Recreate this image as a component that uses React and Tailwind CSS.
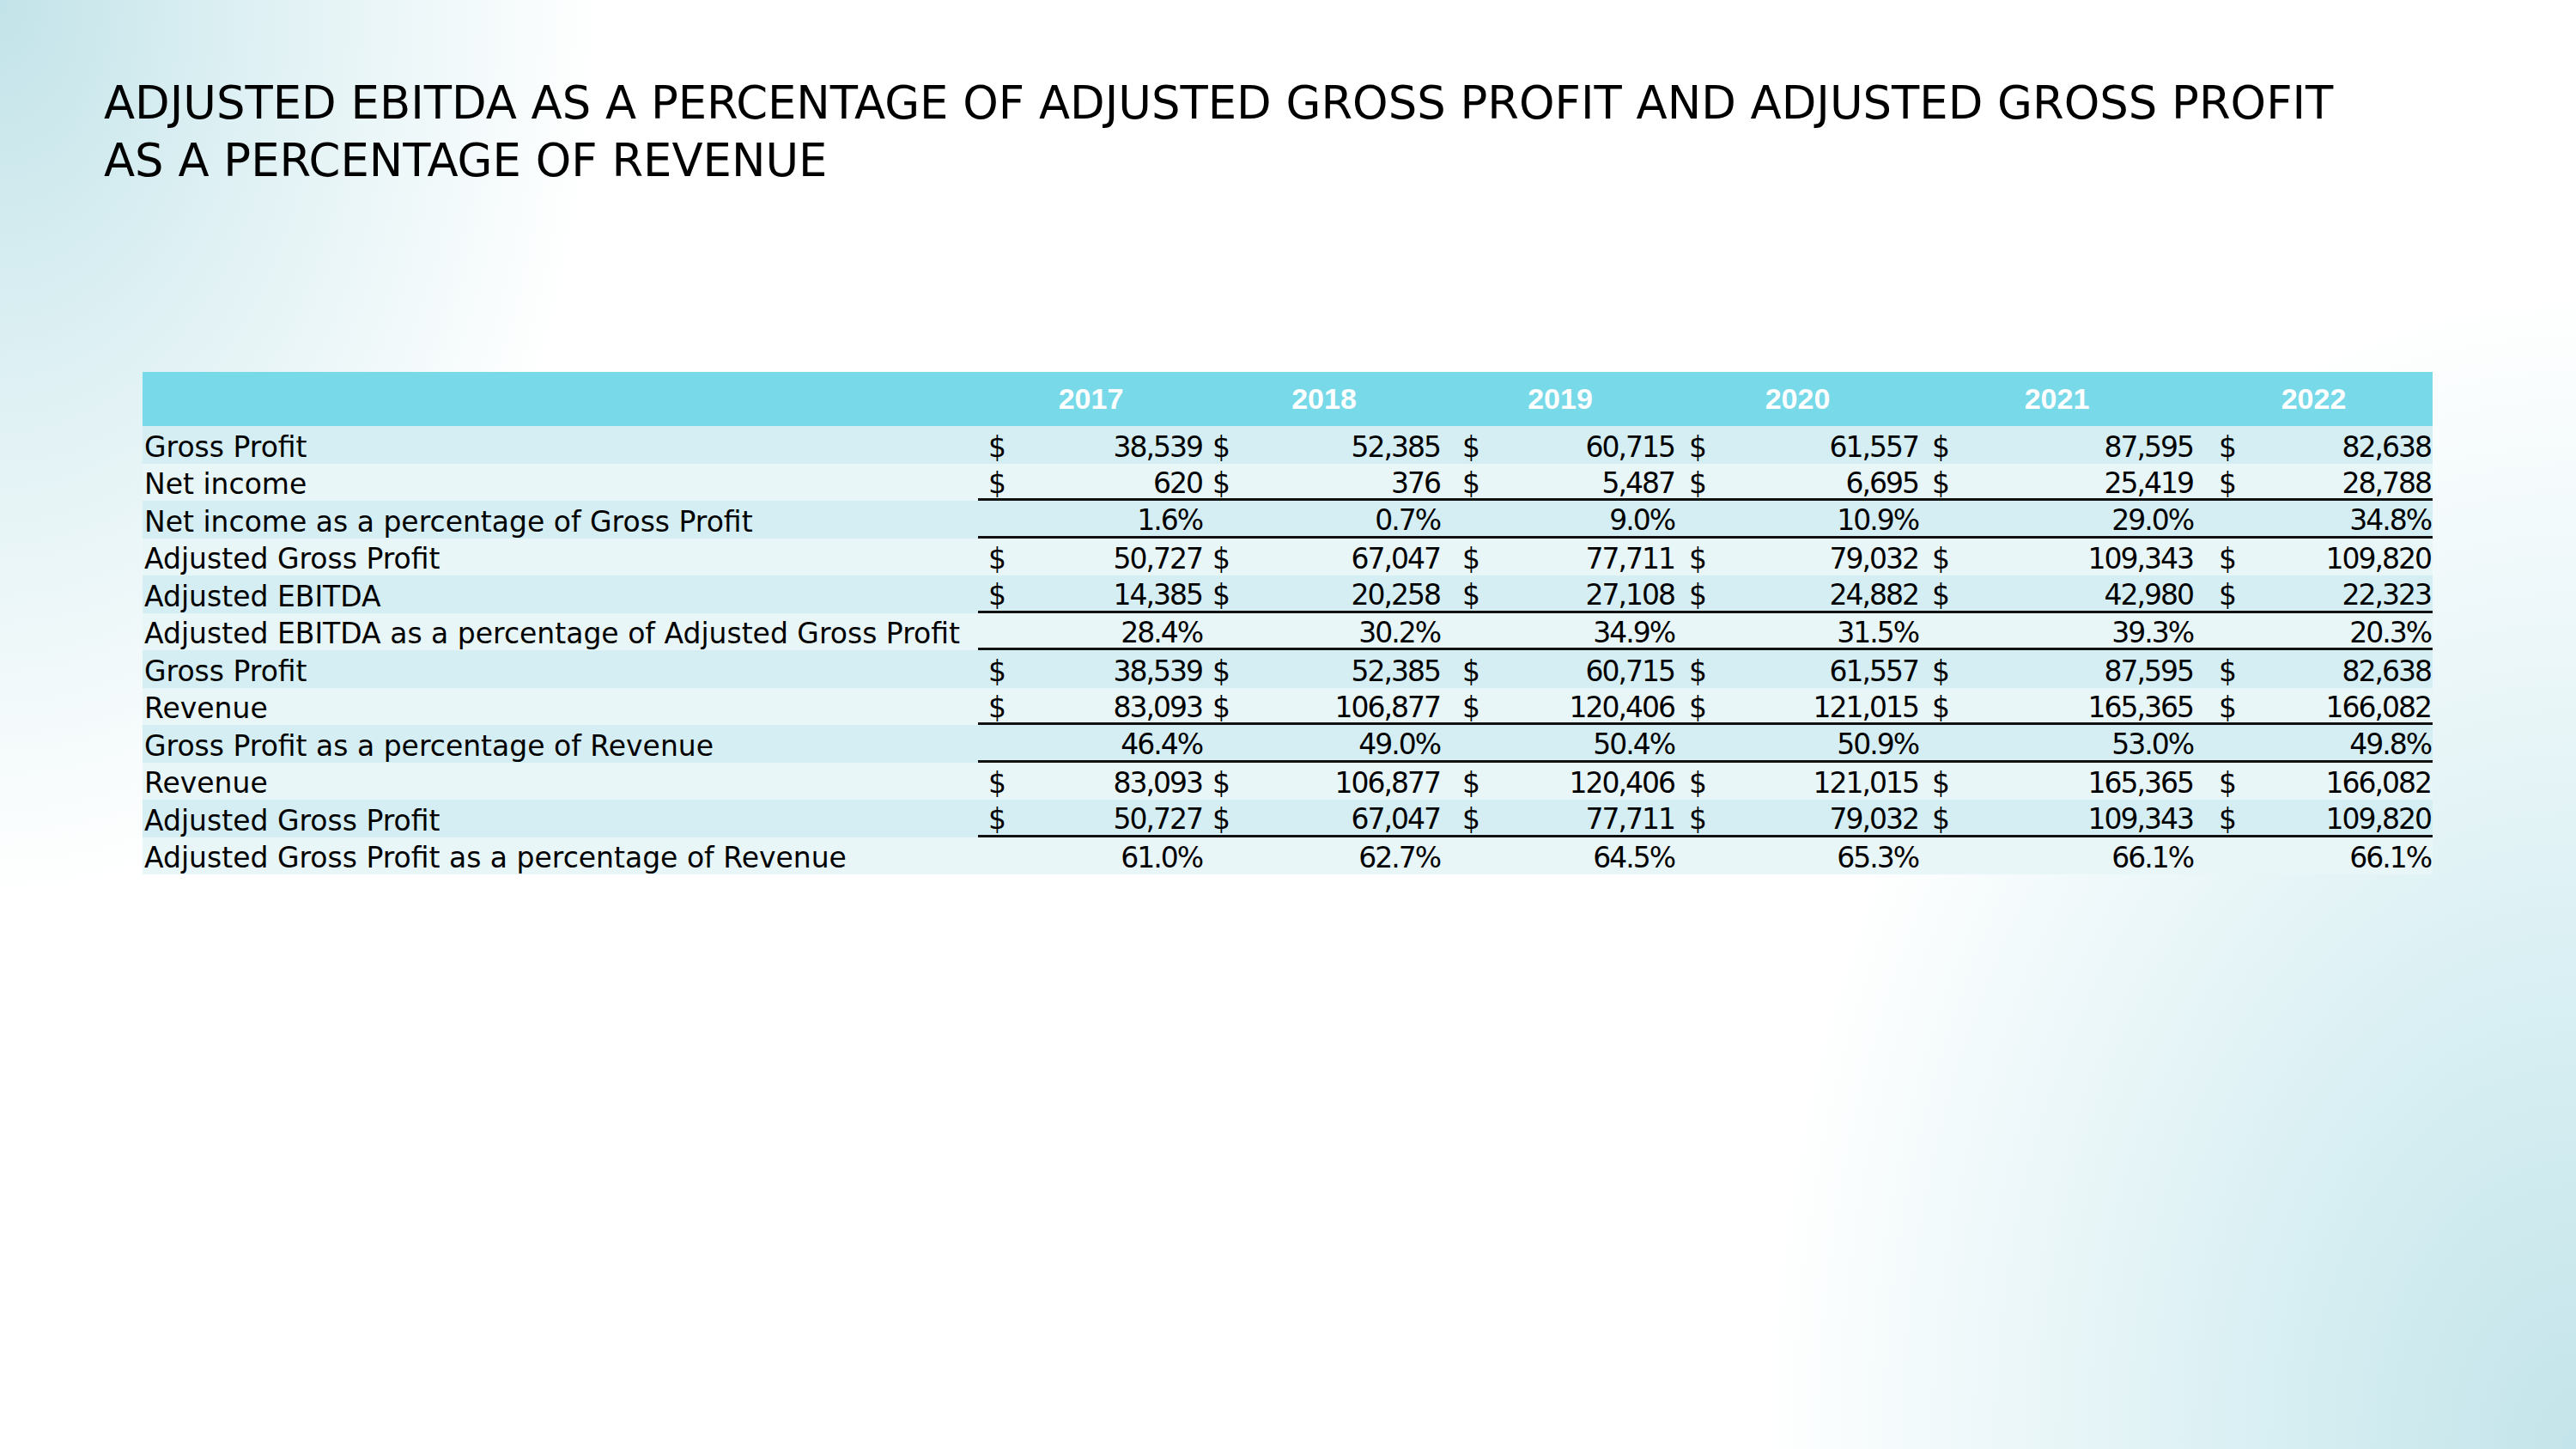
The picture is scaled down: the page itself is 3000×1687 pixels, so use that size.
import React from "react";

const COLS = [
  { cell: "w-[263px] pl-[12px] pr-[2px]", head: "w-[263px]" },
  { cell: "w-[280px] pl-[10px] pr-[5px]", head: "w-[280px]" },
  { cell: "w-[270px] pl-[21px] pr-[2px]", head: "w-[270px]" },
  { cell: "w-[283px] pl-[15px] pr-[1px]", head: "w-[283px]" },
  { cell: "w-[321px] pl-[15px] pr-[2px]", head: "w-[321px]" },
  { cell: "w-[277px] pl-[28px] pr-[2px]", head: "w-[277px]" },
];

const YEARS = ["2017", "2018", "2019", "2020", "2021", "2022"];

const ROWS = [
  { label: "Gross Profit", dollar: true, vals: ["38,539", "52,385", "60,715", "61,557", "87,595", "82,638"] },
  { label: "Net income", dollar: true, border: true, vals: ["620", "376", "5,487", "6,695", "25,419", "28,788"] },
  { label: "Net income as a percentage of Gross Profit", border: true, vals: ["1.6%", "0.7%", "9.0%", "10.9%", "29.0%", "34.8%"] },
  { label: "Adjusted Gross Profit", dollar: true, vals: ["50,727", "67,047", "77,711", "79,032", "109,343", "109,820"] },
  { label: "Adjusted EBITDA", dollar: true, border: true, vals: ["14,385", "20,258", "27,108", "24,882", "42,980", "22,323"] },
  { label: "Adjusted EBITDA as a percentage of Adjusted Gross Profit", border: true, vals: ["28.4%", "30.2%", "34.9%", "31.5%", "39.3%", "20.3%"] },
  { label: "Gross Profit", dollar: true, vals: ["38,539", "52,385", "60,715", "61,557", "87,595", "82,638"] },
  { label: "Revenue", dollar: true, border: true, vals: ["83,093", "106,877", "120,406", "121,015", "165,365", "166,082"] },
  { label: "Gross Profit as a percentage of Revenue", border: true, vals: ["46.4%", "49.0%", "50.4%", "50.9%", "53.0%", "49.8%"] },
  { label: "Revenue", dollar: true, vals: ["83,093", "106,877", "120,406", "121,015", "165,365", "166,082"] },
  { label: "Adjusted Gross Profit", dollar: true, border: true, vals: ["50,727", "67,047", "77,711", "79,032", "109,343", "109,820"] },
  { label: "Adjusted Gross Profit as a percentage of Revenue", vals: ["61.0%", "62.7%", "64.5%", "65.3%", "66.1%", "66.1%"] },
];

function Row({ row, index }) {
  const bg = index % 2 === 0 ? "bg-[#d4eef3]" : "bg-[#e8f6f8]";
  return (
    <div className={`flex h-[43.5px] ${bg}`}>
      <div className="w-[973px] shrink-0 flex items-center pl-[2px] pt-[5px] whitespace-nowrap">
        {row.label}
      </div>
      {row.vals.map((v, i) => (
        <div
          key={i}
          className={`${COLS[i].cell} shrink-0 flex items-center pt-[5px] whitespace-nowrap ${
            row.border ? "border-b-[3px] border-[#111111]" : ""
          }`}
        >
          {row.dollar ? <span>$</span> : null}
          <span className="ml-auto tracking-[-2px]">{v}</span>
        </div>
      ))}
    </div>
  );
}

export default function App() {
  return (
    <div className="w-full h-screen overflow-hidden bg-white bg-[image:radial-gradient(ellipse_700px_1050px_at_0%_0%,#c2e3e9_0%,#ddf0f3_40%,#ffffff00_100%),radial-gradient(ellipse_950px_1350px_at_100%_100%,#c3e4ea_0%,#d6eef2_35%,#ffffff00_100%)] font-['DejaVu_Sans',sans-serif] text-black">
      <div className="pt-[86px] pl-[121px]">
        <h1 className="text-[52.8px] leading-[67px] font-normal whitespace-nowrap text-black">
          ADJUSTED EBITDA AS A PERCENTAGE OF ADJUSTED GROSS PROFIT AND ADJUSTED GROSS PROFIT
          <br />
          AS A PERCENTAGE OF REVENUE
        </h1>
      </div>
      <div className="mt-[213px] ml-[166px] w-[2667px] text-[33px]">
        <div className="flex h-[63px] bg-[#78d9e8]">
          <div className="w-[973px] shrink-0" />
          {YEARS.map((y, i) => (
            <div
              key={y}
              className={`${COLS[i].head} shrink-0 flex items-center justify-center text-white font-bold text-[34px] font-['Liberation_Sans',sans-serif]`}
            >
              {y}
            </div>
          ))}
        </div>
        {ROWS.map((r, i) => (
          <Row key={i} row={r} index={i} />
        ))}
      </div>
    </div>
  );
}
